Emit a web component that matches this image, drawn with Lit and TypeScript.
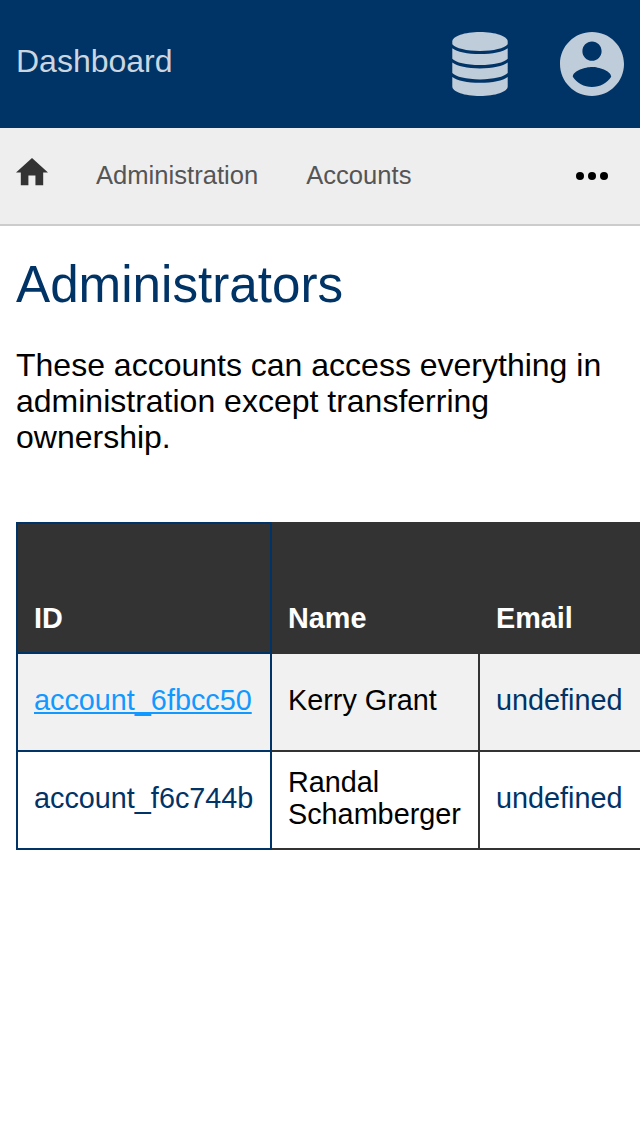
import { LitElement, html, css } from "lit";
import { customElement } from "lit/decorators.js";

interface Account {
  id: string;
  name: string;
  email: string;
  linked: boolean;
}

const accounts: Account[] = [
  { id: "account_6fbcc50", name: "Kerry Grant", email: "undefined", linked: true },
  { id: "account_f6c744b", name: "Randal Schamberger", email: "undefined", linked: false },
];

@customElement("app-header")
class AppHeader extends LitElement {
  static styles = css`
    :host {
      display: block;
    }
    .bar {
      box-sizing: border-box;
      display: flex;
      align-items: center;
      height: 128px;
      padding: 0 16px;
      background: #003366;
      color: #bfccd9;
    }
    .title {
      flex: 1;
      font-size: 32px;
      line-height: 36px;
      padding-bottom: 6px;
      color: #ccd6e0;
    }
    .icons {
      display: flex;
      align-items: center;
      gap: 52px;
    }
    svg {
      display: block;
      fill: currentColor;
    }
  `;

  render() {
    return html`
      <header class="bar">
        <div class="title">Dashboard</div>
        <div class="icons">
          <svg width="56" height="64" viewBox="0 0 56 64" aria-hidden="true">
            <path
              d="M28 0C43.5 0 55.7 4.2 55.7 9.5V12.3C52.5 16.3 41.5 19 28 19S3.5 16.3 .3 12.3V9.5C.3 4.2 12.5 0 28 0z"
            />
            <path
              d="M.3 16.2C5 19.8 15.5 22 28 22S51 19.8 55.7 16.2V26.7C52.5 30.5 41.5 33 28 33S3.5 30.5 .3 26.7z"
            />
            <path
              d="M.3 30.6C5 34.2 15.5 36.4 28 36.4S51 34.2 55.7 30.6V41.1C52.5 44.9 41.5 47.4 28 47.4S3.5 44.9 .3 41.1z"
            />
            <path
              d="M.3 45C5 48.6 15.5 50.8 28 50.8S51 48.6 55.7 45V54.5C55.7 59.8 43.5 64 28 64S.3 59.8 .3 54.5z"
            />
          </svg>
          <svg width="64" height="64" viewBox="2 2 20 20" aria-hidden="true">
            <path
              d="M12 2C6.48 2 2 6.48 2 12s4.48 10 10 10 10-4.48 10-10S17.52 2 12 2zm0 3c1.66 0 3 1.34 3 3s-1.34 3-3 3-3-1.34-3-3 1.34-3 3-3zm0 14.2c-2.5 0-4.71-1.28-6-3.22.03-1.99 4-3.08 6-3.08 1.99 0 5.97 1.09 6 3.08-1.29 1.94-3.5 3.22-6 3.22z"
            />
          </svg>
        </div>
      </header>
    `;
  }
}

@customElement("app-nav")
class AppNav extends LitElement {
  static styles = css`
    :host {
      display: block;
    }
    .nav {
      box-sizing: border-box;
      display: flex;
      align-items: center;
      height: 98px;
      padding: 0 32px 2px 16px;
      background: #eeeeee;
      border-bottom: 2px solid #cccccc;
      font-size: 25.6px;
      line-height: 30px;
      color: #555555;
    }
    .links {
      flex: 1;
      display: flex;
      align-items: center;
      gap: 48px;
    }
    .home {
      display: block;
      fill: #333333;
      padding-bottom: 6px;
    }
    .more {
      display: flex;
      gap: 4px;
      padding-top: 2px;
    }
    .dot {
      width: 8px;
      height: 8px;
      border-radius: 50%;
      background: #000000;
    }
  `;

  render() {
    return html`
      <nav class="nav">
        <div class="links">
          <svg class="home" width="32" height="27.2" viewBox="2 3 20 17" aria-hidden="true">
            <path d="M9.75 20v-6h4.4v6H19v-8h3L12 3 2 12h3v8z" />
          </svg>
          <span>Administration</span>
          <span>Accounts</span>
        </div>
        <div class="more">
          <span class="dot"></span><span class="dot"></span><span class="dot"></span>
        </div>
      </nav>
    `;
  }
}

@customElement("account-table")
class AccountTable extends LitElement {
  static styles = css`
    :host {
      display: block;
      overflow: hidden;
    }
    .table {
      display: grid;
      grid-template-columns: 256px 208px 180px;
      grid-template-rows: 132px 98px 98px;
      width: 644px;
      font-size: 28.8px;
      line-height: 32px;
    }
    .cell {
      box-sizing: border-box;
      display: flex;
      align-items: center;
      padding: 0 16px 4px;
      border: 0 solid #333333;
      border-width: 0 2px 2px 0;
      color: #003366;
    }
    .id {
      border-color: #003366;
      border-left-width: 2px;
    }
    .name {
      color: #000000;
    }
    .striped {
      background: #f1f1f1;
    }
    .head {
      align-items: flex-end;
      padding-bottom: 18px;
      border-top-width: 2px;
      background: #333333;
      color: #ffffff;
      font-weight: bold;
    }
    .link {
      color: #1199ff;
      text-decoration: underline;
    }
  `;

  render() {
    return html`
      <div class="table">
        <div class="cell head id">ID</div>
        <div class="cell head">Name</div>
        <div class="cell head">Email</div>
        ${accounts.map((account, i) => {
          const stripe = i % 2 === 0 ? "striped" : "";
          return html`
            <div class="cell id ${stripe}">
              <span class=${account.linked ? "link" : ""}>${account.id}</span>
            </div>
            <div class="cell name ${stripe}">${account.name}</div>
            <div class="cell ${stripe}">${account.email}</div>
          `;
        })}
      </div>
    `;
  }
}

@customElement("app-root")
class AppRoot extends LitElement {
  static styles = css`
    :host {
      display: block;
      height: 1136px;
      overflow: hidden;
      background: #ffffff;
      font-family: "Liberation Sans", Arial, sans-serif;
      color: #000000;
    }
    .content {
      padding: 29px 0 0 16px;
    }
    .heading {
      margin: 0;
      font-size: 51.2px;
      line-height: 59px;
      font-weight: normal;
      color: #003366;
    }
    .intro {
      margin: 33px 16px 67px 0;
      font-size: 32px;
      line-height: 36px;
    }
  `;

  render() {
    return html`
      <app-header></app-header>
      <app-nav></app-nav>
      <main class="content">
        <h1 class="heading">Administrators</h1>
        <p class="intro">
          These accounts can access everything in administration except transferring ownership.
        </p>
        <account-table></account-table>
      </main>
    `;
  }
}
